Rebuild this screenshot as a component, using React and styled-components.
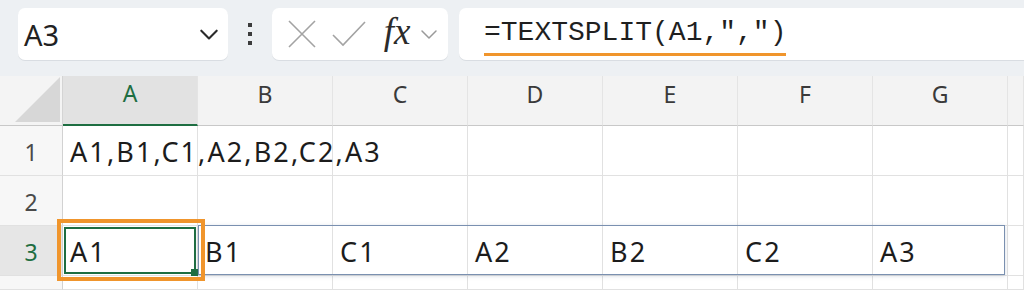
import React from 'react';
import styled, { createGlobalStyle } from 'styled-components';

const GlobalStyle = createGlobalStyle`
  html, body {
    margin: 0;
    padding: 0;
    background: #ffffff;
    font-family: "Noto Sans", "Noto Sans CJK JP", sans-serif;
    overflow: hidden;
  }
`;

const COL_W = 135;
const ROW_H = 50;
const COLS = ['A', 'B', 'C', 'D', 'E', 'F', 'G', ''];

const Page = styled.div`
  width: 1024px;
  height: 290px;
  overflow: hidden;
`;

const Toolbar = styled.div`
  height: 76px;
  box-sizing: border-box;
  padding: 8px 0 16px 18px;
  background: #edf0f3;
  display: flex;
  align-items: stretch;
`;

const WhiteBox = styled.div`
  background: #ffffff;
  border-radius: 7px;
  box-shadow: 0 1px 0 #d9dde2;
  display: flex;
  align-items: center;
`;

const NameBox = styled(WhiteBox)`
  width: 210px;
  padding: 0 8px 0 6px;
  box-sizing: border-box;
  justify-content: space-between;
  font-size: 29px;
  color: #222;
`;

const Dots = styled.div`
  width: 44px;
  display: flex;
  flex-direction: column;
  align-items: center;
  justify-content: center;
  gap: 5px;
  & > span {
    width: 4px;
    height: 4px;
    background: #3c3c3c;
  }
`;

const ButtonBox = styled(WhiteBox)`
  width: 176px;
  padding: 0 6px 0 11px;
  box-sizing: border-box;
`;

const IconSlot = styled.div`
  width: ${p => p.w}px;
  display: flex;
  align-items: center;
  justify-content: center;
`;

const Fx = styled.span`
  font-family: "Liberation Serif", "DejaVu Serif", serif;
  font-style: italic;
  font-size: 37px;
  color: #2b2b2b;
  line-height: 1;
  margin-top: -6px;
`;

const FormulaBar = styled(WhiteBox)`
  flex: 1;
  margin-left: 11px;
  border-radius: 7px 0 0 7px;
  padding-left: 25px;
`;

const FormulaText = styled.span`
  font-family: "Liberation Mono", "DejaVu Sans Mono", monospace;
  font-size: 28px;
  color: #1f1f1f;
  padding-bottom: 3px;
  margin-top: 4px;
  border-bottom: 3px solid #f0952c;
  line-height: 34px;
`;

const Sheet = styled.div`
  position: relative;
  display: grid;
  grid-template-columns: 63px repeat(7, ${COL_W}px) 1fr;
  grid-template-rows: ${ROW_H}px repeat(3, ${ROW_H}px) 1fr;
  height: 214px;
`;

const Corner = styled.div`
  background: #f4f4f4;
  border-right: 1px solid #d4d4d4;
  border-bottom: 1px solid #c8c8c8;
  display: flex;
  align-items: flex-end;
  justify-content: flex-end;
  padding: 0 2px 3px 0;
`;

const ColHead = styled.div`
  box-sizing: border-box;
  background: ${p => (p.active ? '#e2e2e2' : '#f3f3f3')};
  border-right: 1px solid #e4e4e4;
  border-bottom: ${p => (p.active ? '2px solid #1e6e42' : '1px solid #c8c8c8')};
  color: ${p => (p.active ? '#1e6e42' : '#3a3a3a')};
  font-size: 23px;
  display: flex;
  align-items: center;
  justify-content: center;
  padding-bottom: 14px;
`;

const RowHead = styled.div`
  box-sizing: border-box;
  background: ${p => (p.active ? '#e6e6e6' : '#f7f7f7')};
  border-right: 1px solid #d2d2d2;
  border-bottom: 1px solid #e1e1e1;
  color: ${p => (p.active ? '#1e6e42' : '#4a4a4a')};
  font-size: 23px;
  display: flex;
  align-items: center;
  justify-content: center;
  padding-top: 2px;
`;

const Cell = styled.div`
  box-sizing: border-box;
  border-right: 1px solid #e1e1e1;
  border-bottom: 1px solid #e1e1e1;
  font-size: 27px;
  letter-spacing: 2.1px;
  color: #1c1c1c;
  white-space: nowrap;
  display: flex;
  align-items: center;
  padding: 2px 0 0 7px;
  position: relative;
  z-index: ${p => (p.over ? 2 : 1)};
`;

const SpillRange = styled.div`
  position: absolute;
  left: 198px;
  top: 149px;
  width: 807px;
  height: 50px;
  box-sizing: border-box;
  border: 1.5px solid #7a90b0;
  box-shadow: 0 1px 4px rgba(90, 110, 140, 0.25);
  z-index: 3;
  pointer-events: none;
`;

const Highlight = styled.div`
  position: absolute;
  left: 57px;
  top: 143px;
  width: 148px;
  height: 62px;
  box-sizing: border-box;
  border: 4px solid #f0952c;
  z-index: 4;
  pointer-events: none;
`;

const ActiveCell = styled.div`
  position: absolute;
  inset: 1px;
  border: 2px solid #1e6e42;
  &::after {
    content: '';
    position: absolute;
    right: -4px;
    bottom: -4px;
    width: 7px;
    height: 7px;
    background: #1e6e42;
  }
`;

const Chevron = ({ size = 20, color = '#333', sw = 1.8 }) => (
  <svg width={size} height={size} viewBox="0 0 20 20" fill="none">
    <path d="M3 7 L10 14 L17 7" stroke={color} strokeWidth={sw} strokeLinecap="round" strokeLinejoin="round" />
  </svg>
);

const Cross = () => (
  <svg width="30" height="30" viewBox="0 0 30 30" fill="none">
    <path d="M2 2 L28 28 M28 2 L2 28" stroke="#a3a3a3" strokeWidth="1.6" />
  </svg>
);

const Check = () => (
  <svg width="34" height="28" viewBox="0 0 34 28" fill="none">
    <path d="M1 15 L11 25 L33 2" stroke="#a3a3a3" strokeWidth="1.6" />
  </svg>
);

const CornerTriangle = () => (
  <svg width="45" height="45" viewBox="0 0 45 45">
    <path d="M45 0 L45 45 L0 45 Z" fill="#d7d7d7" />
  </svg>
);

const rows = [
  ['A1,B1,C1,A2,B2,C2,A3', '', '', '', '', '', '', ''],
  ['', '', '', '', '', '', '', ''],
  ['A1', 'B1', 'C1', 'A2', 'B2', 'C2', 'A3', ''],
];

export default function App() {
  return (
    <Page>
      <GlobalStyle />
      <Toolbar>
        <NameBox>
          <span>A3</span>
          <Chevron size={22} color="#2a2a2a" sw={1.9} />
        </NameBox>
        <Dots><span /><span /><span /></Dots>
        <ButtonBox>
          <IconSlot w={38}><Cross /></IconSlot>
          <IconSlot w={56}><Check /></IconSlot>
          <IconSlot w={40}><Fx>fx</Fx></IconSlot>
          <IconSlot w={24}><Chevron size={20} color="#9a9a9a" sw={1.5} /></IconSlot>
        </ButtonBox>
        <FormulaBar>
          <FormulaText>=TEXTSPLIT(A1,",")</FormulaText>
        </FormulaBar>
      </Toolbar>
      <Sheet>
        <Corner><CornerTriangle /></Corner>
        {COLS.map((c, i) => (
          <ColHead key={`h-${i}`} active={c === 'A'}>{c}</ColHead>
        ))}
        {rows.map((r, ri) => (
          <React.Fragment key={`r-${ri}`}>
            <RowHead active={ri === 2}>{ri + 1}</RowHead>
            {r.map((v, ci) => (
              <Cell key={`c-${ri}-${ci}`} over={ri === 0 && ci === 0}>
                {v}
                {ri === 2 && ci === 0 && <ActiveCell />}
              </Cell>
            ))}
          </React.Fragment>
        ))}
        <RowHead />
        {COLS.map((c, i) => <Cell key={`e-${i}`} />)}
        <SpillRange />
        <Highlight />
      </Sheet>
    </Page>
  );
}
